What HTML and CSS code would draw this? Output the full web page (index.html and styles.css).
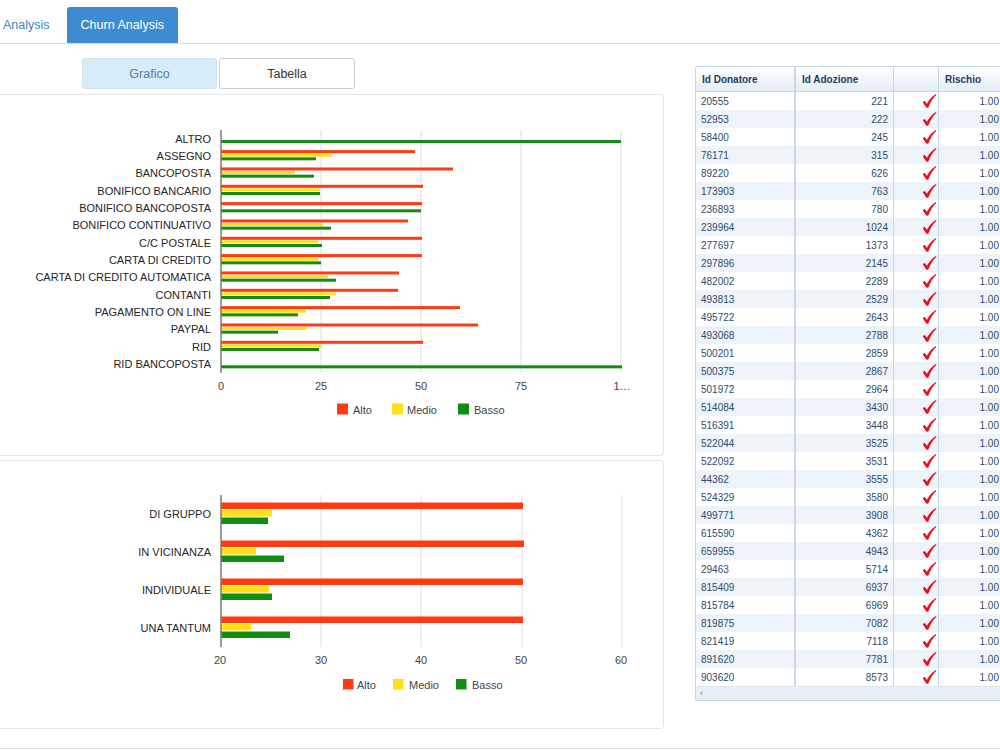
FILE: index.html
```html
<!DOCTYPE html>
<html>
<head>
<meta charset="utf-8">
<link rel="stylesheet" href="styles.css">
</head>
<body>
<svg class="defs" width="0" height="0"><symbol id="ck" viewBox="0 0 16 16"><path d="M0.8 9.2 L2.7 7.8 L5.2 10.8 C7.6 6.6 10.6 3.1 14.8 0.4 L15.4 1.3 C11.8 4.6 9 9 6.6 15.2 L4.7 15.2 Z"/></symbol></svg>
<div class="page">
  <ul class="nav">
    <li class="tab first">Analysis</li>
    <li class="tab active">Churn Analysis</li>
  </ul>
  <div class="main">
    <div class="left">
      <div class="toggle">
        <button class="btn on">Grafico</button>
        <button class="btn">Tabella</button>
      </div>
      <div class="panel p1">
        <svg class="ch" width="668" height="360" viewBox="-5 95 668 360">
          <g class="grid">
            <line x1="321" y1="130" x2="321" y2="373"/>
            <line x1="421" y1="130" x2="421" y2="373"/>
            <line x1="521" y1="130" x2="521" y2="373"/>
            <line x1="621" y1="130" x2="621" y2="373"/>
          </g>
          <g class="lbl">
            <text x="211" y="142.7">ALTRO</text>
            <text x="211" y="160">ASSEGNO</text>
            <text x="211" y="177.3">BANCOPOSTA</text>
            <text x="211" y="194.7">BONIFICO BANCARIO</text>
            <text x="211" y="212">BONIFICO BANCOPOSTA</text>
            <text x="211" y="229.3">BONIFICO CONTINUATIVO</text>
            <text x="211" y="246.7">C/C POSTALE</text>
            <text x="211" y="264">CARTA DI CREDITO</text>
            <text x="211" y="281.3">CARTA DI CREDITO AUTOMATICA</text>
            <text x="211" y="298.7">CONTANTI</text>
            <text x="211" y="316">PAGAMENTO ON LINE</text>
            <text x="211" y="333.3">PAYPAL</text>
            <text x="211" y="350.7">RID</text>
            <text x="211" y="368">RID BANCOPOSTA</text>
          </g>
          <g class="b1">
            <g transform="translate(221 130)"><rect class="g" y="10" width="400" height="3"/></g>
            <g transform="translate(221 147.33)"><rect class="r" y="2.8" width="194" height="3"/><rect class="y" y="6.4" width="111" height="3"/><rect class="g" y="10" width="95" height="3"/></g>
            <g transform="translate(221 164.67)"><rect class="r" y="2.8" width="232" height="3"/><rect class="y" y="6.4" width="74" height="3"/><rect class="g" y="10" width="93" height="3"/></g>
            <g transform="translate(221 182)"><rect class="r" y="2.8" width="202" height="3"/><rect class="y" y="6.4" width="99" height="3"/><rect class="g" y="10" width="99" height="3"/></g>
            <g transform="translate(221 199.33)"><rect class="r" y="2.8" width="201" height="3"/><rect class="g" y="10" width="200" height="3"/></g>
            <g transform="translate(221 216.67)"><rect class="r" y="2.8" width="187" height="3"/><rect class="y" y="6.4" width="102" height="3"/><rect class="g" y="10" width="110" height="3"/></g>
            <g transform="translate(221 234)"><rect class="r" y="2.8" width="201" height="3"/><rect class="y" y="6.4" width="97" height="3"/><rect class="g" y="10" width="101" height="3"/></g>
            <g transform="translate(221 251.33)"><rect class="r" y="2.8" width="201" height="3"/><rect class="y" y="6.4" width="97" height="3"/><rect class="g" y="10" width="100" height="3"/></g>
            <g transform="translate(221 268.67)"><rect class="r" y="2.8" width="178" height="3"/><rect class="y" y="6.4" width="107" height="3"/><rect class="g" y="10" width="115" height="3"/></g>
            <g transform="translate(221 286)"><rect class="r" y="2.8" width="177" height="3"/><rect class="y" y="6.4" width="115" height="3"/><rect class="g" y="10" width="109" height="3"/></g>
            <g transform="translate(221 303.33)"><rect class="r" y="2.8" width="239" height="3"/><rect class="y" y="6.4" width="85" height="3"/><rect class="g" y="10" width="77" height="3"/></g>
            <g transform="translate(221 320.67)"><rect class="r" y="2.8" width="257" height="3"/><rect class="y" y="6.4" width="86" height="3"/><rect class="g" y="10" width="57" height="3"/></g>
            <g transform="translate(221 338)"><rect class="r" y="2.8" width="202" height="3"/><rect class="y" y="6.4" width="101" height="3"/><rect class="g" y="10" width="98" height="3"/></g>
            <g transform="translate(221 355.33)"><rect class="g" y="10" width="401" height="3"/></g>
          </g>
          <line class="axis" x1="221" y1="130" x2="221" y2="373"/>
          <g class="tk">
            <text x="221" y="390">0</text>
            <text x="321" y="390">25</text>
            <text x="421" y="390">50</text>
            <text x="521" y="390">75</text>
            <text x="622" y="390">1…</text>
          </g>
          <g class="lg">
            <rect class="r" x="337" y="403.5" width="11" height="11"/><text x="353" y="413.5">Alto</text>
            <rect class="y" x="392" y="403.5" width="11" height="11"/><text x="407" y="413.5">Medio</text>
            <rect class="g" x="458" y="403.5" width="11" height="11"/><text x="474" y="413.5">Basso</text>
          </g>
        </svg>
      </div>
      <div class="panel p2">
        <svg class="ch" width="668" height="267" viewBox="-5 461 668 267">
          <g class="grid">
            <line x1="321" y1="495" x2="321" y2="647"/>
            <line x1="421" y1="495" x2="421" y2="647"/>
            <line x1="522" y1="495" x2="522" y2="647"/>
            <line x1="622" y1="495" x2="622" y2="647"/>
          </g>
          <g class="lbl">
            <text x="211" y="518">DI GRUPPO</text>
            <text x="211" y="556">IN VICINANZA</text>
            <text x="211" y="594">INDIVIDUALE</text>
            <text x="211" y="632">UNA TANTUM</text>
          </g>
          <g class="b2">
            <g transform="translate(221 495)"><rect class="r" y="7.5" width="302" height="6.5"/><rect class="y" y="15" width="51" height="6.5"/><rect class="g" y="22.5" width="47" height="6.5"/></g>
            <g transform="translate(221 533)"><rect class="r" y="7.5" width="303" height="6.5"/><rect class="y" y="15" width="35" height="6.5"/><rect class="g" y="22.5" width="63" height="6.5"/></g>
            <g transform="translate(221 571)"><rect class="r" y="7.5" width="302" height="6.5"/><rect class="y" y="15" width="48" height="6.5"/><rect class="g" y="22.5" width="51" height="6.5"/></g>
            <g transform="translate(221 609)"><rect class="r" y="7.5" width="302" height="6.5"/><rect class="y" y="15" width="30" height="6.5"/><rect class="g" y="22.5" width="69" height="6.5"/></g>
          </g>
          <line class="axis" x1="221" y1="495" x2="221" y2="647"/>
          <g class="tk">
            <text x="220" y="664">20</text>
            <text x="321" y="664">30</text>
            <text x="421" y="664">40</text>
            <text x="521" y="664">50</text>
            <text x="621" y="664">60</text>
          </g>
          <g class="lg">
            <rect class="r" x="343" y="679" width="10.5" height="10.5"/><text x="357" y="688.5">Alto</text>
            <rect class="y" x="393" y="679" width="10.5" height="10.5"/><text x="409" y="688.5">Medio</text>
            <rect class="g" x="456" y="679" width="10.5" height="10.5"/><text x="472" y="688.5">Basso</text>
          </g>
        </svg>
      </div>
    </div>
    <div class="right">
      <div class="tbl">
        <table>
          <colgroup><col class="c1"><col class="c2"><col class="c3"><col class="c4"></colgroup>
          <thead>
            <tr><th>Id Donatore</th><th>Id Adozione</th><th></th><th>Rischio</th></tr>
          </thead>
          <tbody>
            <tr><td>20555</td><td class="n">221</td><td class="k"><svg class="tick"><use href="#ck"/></svg></td><td class="n">1.00</td></tr>
            <tr><td>52953</td><td class="n">222</td><td class="k"><svg class="tick"><use href="#ck"/></svg></td><td class="n">1.00</td></tr>
            <tr><td>58400</td><td class="n">245</td><td class="k"><svg class="tick"><use href="#ck"/></svg></td><td class="n">1.00</td></tr>
            <tr><td>76171</td><td class="n">315</td><td class="k"><svg class="tick"><use href="#ck"/></svg></td><td class="n">1.00</td></tr>
            <tr><td>89220</td><td class="n">626</td><td class="k"><svg class="tick"><use href="#ck"/></svg></td><td class="n">1.00</td></tr>
            <tr><td>173903</td><td class="n">763</td><td class="k"><svg class="tick"><use href="#ck"/></svg></td><td class="n">1.00</td></tr>
            <tr><td>236893</td><td class="n">780</td><td class="k"><svg class="tick"><use href="#ck"/></svg></td><td class="n">1.00</td></tr>
            <tr><td>239964</td><td class="n">1024</td><td class="k"><svg class="tick"><use href="#ck"/></svg></td><td class="n">1.00</td></tr>
            <tr><td>277697</td><td class="n">1373</td><td class="k"><svg class="tick"><use href="#ck"/></svg></td><td class="n">1.00</td></tr>
            <tr><td>297896</td><td class="n">2145</td><td class="k"><svg class="tick"><use href="#ck"/></svg></td><td class="n">1.00</td></tr>
            <tr><td>482002</td><td class="n">2289</td><td class="k"><svg class="tick"><use href="#ck"/></svg></td><td class="n">1.00</td></tr>
            <tr><td>493813</td><td class="n">2529</td><td class="k"><svg class="tick"><use href="#ck"/></svg></td><td class="n">1.00</td></tr>
            <tr><td>495722</td><td class="n">2643</td><td class="k"><svg class="tick"><use href="#ck"/></svg></td><td class="n">1.00</td></tr>
            <tr><td>493068</td><td class="n">2788</td><td class="k"><svg class="tick"><use href="#ck"/></svg></td><td class="n">1.00</td></tr>
            <tr><td>500201</td><td class="n">2859</td><td class="k"><svg class="tick"><use href="#ck"/></svg></td><td class="n">1.00</td></tr>
            <tr><td>500375</td><td class="n">2867</td><td class="k"><svg class="tick"><use href="#ck"/></svg></td><td class="n">1.00</td></tr>
            <tr><td>501972</td><td class="n">2964</td><td class="k"><svg class="tick"><use href="#ck"/></svg></td><td class="n">1.00</td></tr>
            <tr><td>514084</td><td class="n">3430</td><td class="k"><svg class="tick"><use href="#ck"/></svg></td><td class="n">1.00</td></tr>
            <tr><td>516391</td><td class="n">3448</td><td class="k"><svg class="tick"><use href="#ck"/></svg></td><td class="n">1.00</td></tr>
            <tr><td>522044</td><td class="n">3525</td><td class="k"><svg class="tick"><use href="#ck"/></svg></td><td class="n">1.00</td></tr>
            <tr><td>522092</td><td class="n">3531</td><td class="k"><svg class="tick"><use href="#ck"/></svg></td><td class="n">1.00</td></tr>
            <tr><td>44362</td><td class="n">3555</td><td class="k"><svg class="tick"><use href="#ck"/></svg></td><td class="n">1.00</td></tr>
            <tr><td>524329</td><td class="n">3580</td><td class="k"><svg class="tick"><use href="#ck"/></svg></td><td class="n">1.00</td></tr>
            <tr><td>499771</td><td class="n">3908</td><td class="k"><svg class="tick"><use href="#ck"/></svg></td><td class="n">1.00</td></tr>
            <tr><td>615590</td><td class="n">4362</td><td class="k"><svg class="tick"><use href="#ck"/></svg></td><td class="n">1.00</td></tr>
            <tr><td>659955</td><td class="n">4943</td><td class="k"><svg class="tick"><use href="#ck"/></svg></td><td class="n">1.00</td></tr>
            <tr><td>29463</td><td class="n">5714</td><td class="k"><svg class="tick"><use href="#ck"/></svg></td><td class="n">1.00</td></tr>
            <tr><td>815409</td><td class="n">6937</td><td class="k"><svg class="tick"><use href="#ck"/></svg></td><td class="n">1.00</td></tr>
            <tr><td>815784</td><td class="n">6969</td><td class="k"><svg class="tick"><use href="#ck"/></svg></td><td class="n">1.00</td></tr>
            <tr><td>819875</td><td class="n">7082</td><td class="k"><svg class="tick"><use href="#ck"/></svg></td><td class="n">1.00</td></tr>
            <tr><td>821419</td><td class="n">7118</td><td class="k"><svg class="tick"><use href="#ck"/></svg></td><td class="n">1.00</td></tr>
            <tr><td>891620</td><td class="n">7781</td><td class="k"><svg class="tick"><use href="#ck"/></svg></td><td class="n">1.00</td></tr>
            <tr><td>903620</td><td class="n">8573</td><td class="k"><svg class="tick"><use href="#ck"/></svg></td><td class="n">1.00</td></tr>
          </tbody>
        </table>
        <div class="hscroll">‹</div>
      </div>
    </div>
  </div>
  <div class="footer"></div>
</div>
</body>
</html>
```
FILE: styles.css
```css
html, body {
  margin: 0;
  padding: 0;
  width: 1000px;
  height: 750px;
  overflow: hidden;
  background: #fff;
  font-family: "Liberation Sans", Arial, sans-serif;
}
.defs { position: absolute; width: 0; height: 0; }
.page { width: 1000px; }

.nav {
  display: flex;
  align-items: flex-end;
  list-style: none;
  margin: 0;
  padding: 0;
  height: 43px;
  border-bottom: 1px solid #dcdcdc;
}
.tab {
  height: 36px;
  line-height: 36px;
  padding: 0 14px;
  margin-right: 3px;
  font-size: 12.5px;
  color: #3a86c6;
  border-radius: 3px 3px 0 0;
}
.tab.first { margin-left: -11px; }
.tab.active {
  background: #3d8bd0;
  color: #fff;
}

.main {
  display: flex;
  align-items: flex-start;
}
.left {
  width: 670px;
  margin-left: -6px;
  flex: none;
}
.toggle {
  display: flex;
  gap: 2px;
  margin: 14px 0 0 88px;
}
.btn {
  width: 135px;
  height: 31px;
  border: 1px solid #ccc;
  border-radius: 3px;
  background: #fff;
  color: #333;
  font-family: "Liberation Sans", Arial, sans-serif;
  font-size: 12.5px;
  padding: 0;
}
.btn + .btn { width: 136px; }
.btn.on {
  background: #d7ebf8;
  border-color: #cfe3f2;
  color: #4c7fae;
}
.panel {
  border: 1px solid #e4e4e4;
  border-radius: 4px;
  background: #fff;
}
.p1 { margin-top: 5px; height: 360px; }
.p2 { margin-top: 4px; height: 267px; }
.ch { display: block; }
.ch text {
  font-family: "Liberation Sans", Arial, sans-serif;
  font-size: 11px;
}
.grid line { stroke: #dedede; stroke-width: 1; }
.axis { stroke: #7a7a7a; stroke-width: 1.5; }
.lbl text { text-anchor: end; fill: #262626; }
.tk text { text-anchor: middle; fill: #444; }
.lg text { fill: #444; }
.r { fill: #ff3a12; }
.y { fill: #ffe01a; }
.g { fill: #128c12; }

.right {
  margin-left: 31px;
  margin-top: 22px;
  flex: none;
}
.tbl {
  width: 307px;
  border: 1px solid #c3d7e7;
  border-radius: 2px;
}
table {
  border-collapse: separate;
  border-spacing: 0;
  table-layout: fixed;
  width: 307px;
  font-size: 10px;
  color: #2c4c6d;
}
col.c1 { width: 100px; }
col.c2 { width: 98px; }
col.c3 { width: 45px; }
col.c4 { width: 64px; }
th {
  height: 24px;
  padding: 0 6px;
  text-align: left;
  font-weight: bold;
  color: #1e3c5b;
  background: linear-gradient(#ffffff, #e3edf6);
  border-bottom: 1px solid #c3d7e7;
  border-right: 1px solid #c3d7e7;
}
td {
  height: 18px;
  padding: 0 5px;
  border-right: 1px solid #c6d9e8;
  white-space: nowrap;
  overflow: hidden;
}
th:first-child, td:first-child { border-right: 2px solid #c6d9e8; }
th:last-child, td:last-child { border-right: none; }
tbody tr:nth-child(even) td { background: #edf3f9; }
td.n { text-align: right; }
td:last-child { padding-right: 4px; }
td.k { text-align: right; padding: 0 1px 0 0; line-height: 0; }
.tick {
  width: 15px;
  height: 16px;
  fill: #e8101a;
  vertical-align: middle;
}
.hscroll {
  height: 13px;
  line-height: 12px;
  background: #eaeff3;
  border-top: 1px solid #dde6ee;
  font-size: 9px;
  color: #777;
  padding-left: 4px;
}
.footer {
  margin-top: 19px;
  border-top: 1px solid #e0e0e0;
}
```
